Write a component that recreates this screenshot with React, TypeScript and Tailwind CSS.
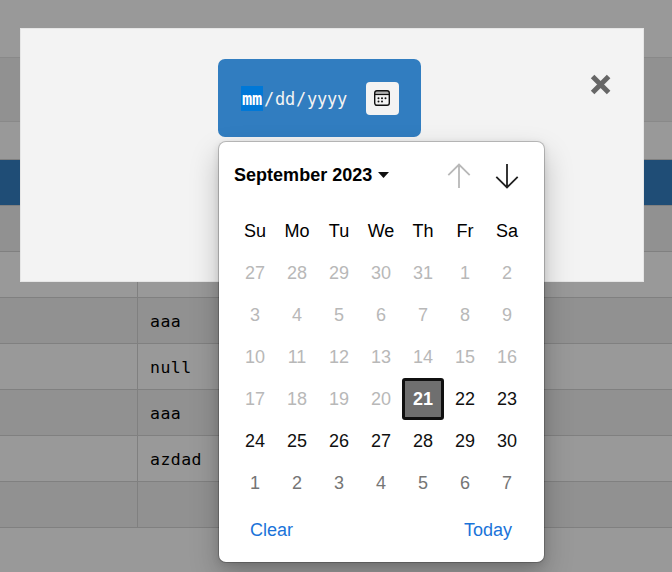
import React from "react";

type Row = { height: string; tone: string; text?: string; split?: boolean };

const rows: Row[] = [
  { height: "h-[58px]", tone: "bg-[#999999] border-[#898989]" },
  { height: "h-16", tone: "bg-[#919191] border-[#898989]" },
  { height: "h-[38px]", tone: "bg-[#999999] border-[#808080]" },
  { height: "h-[46px]", tone: "bg-[#1f4d76] border-[#808080]" },
  { height: "h-[46px]", tone: "bg-[#919191] border-[#808080]" },
  { height: "h-[46px]", tone: "bg-[#999999] border-[#808080]", split: true },
  { height: "h-[46px]", tone: "bg-[#919191] border-[#808080]", split: true, text: "aaa" },
  { height: "h-[46px]", tone: "bg-[#999999] border-[#808080]", split: true, text: "null" },
  { height: "h-[46px]", tone: "bg-[#919191] border-[#808080]", split: true, text: "aaa" },
  { height: "h-[46px]", tone: "bg-[#999999] border-[#808080]", split: true, text: "azdad" },
  { height: "h-[46px]", tone: "bg-[#919191] border-[#808080]", split: true },
];

const weekdays = ["Su", "Mo", "Tu", "We", "Th", "Fr", "Sa"];

const days = [
  27, 28, 29, 30, 31, 1, 2, 3, 4, 5, 6, 7, 8, 9, 10, 11, 12, 13, 14, 15, 16,
  17, 18, 19, 20, 21, 22, 23, 24, 25, 26, 27, 28, 29, 30, 1, 2, 3, 4, 5, 6, 7,
];

function dayClass(index: number) {
  if (index === 25)
    return "rounded-[3px] border-[3px] border-[#101010] bg-[#6f6f6f] font-bold text-white";
  if (index < 25) return "text-[#b8b8b8]";
  if (index < 35) return "text-[#101010]";
  return "text-[#757575]";
}

function Table() {
  return (
    <div className="flex flex-col font-['DejaVu_Sans_Mono',monospace] text-[16.5px] tracking-[0.45px] text-black">
      {rows.map((row, i) => (
        <div key={i} className={`flex shrink-0 border-b ${row.height} ${row.tone}`}>
          {row.split && (
            <>
              <div className="w-[138px] border-r border-[#808080]" />
              <div className="flex items-center pt-[3px] pl-3">{row.text}</div>
            </>
          )}
        </div>
      ))}
    </div>
  );
}

function CalendarIcon() {
  return (
    <svg width="16" height="16" viewBox="0 0 16 16" fill="none" stroke="#101010">
      <path d="M1 4.5V3Q1 1 3 1H13Q15 1 15 3V4.5Z" fill="#b0b0b0" stroke="none" />
      <rect x="0.7" y="0.7" width="14.6" height="14.6" rx="2.2" strokeWidth="1.4" />
      <path d="M1 4.5H15" strokeWidth="1.2" />
      <g fill="#101010" stroke="none">
        <circle cx="4.5" cy="8.3" r="1" />
        <circle cx="8" cy="8.3" r="1" />
        <circle cx="11.5" cy="8.3" r="1" />
        <circle cx="4.5" cy="11.5" r="1" />
        <circle cx="8" cy="11.5" r="1" />
      </g>
    </svg>
  );
}

function DateField() {
  return (
    <div className="ml-[197px] mt-[30px] flex h-[78px] w-[203px] items-center rounded-[7px] bg-[#317dc0] pl-[23px] font-['DejaVu_Sans_Mono',monospace] text-[17px] tracking-[-0.2px] text-[#f3f3f3]">
      <span className="flex h-[25px] w-[22px] items-center justify-center bg-[#0078d7] pt-[3px] font-bold text-white">
        mm
      </span>
      <span className="w-3 pt-[3px] text-center">/</span>
      <span className="w-5 pt-[3px]">dd</span>
      <span className="w-3 pt-[3px] text-center">/</span>
      <span className="w-[41px] pt-[3px]">yyyy</span>
      <button className="ml-[18px] flex size-[33px] items-center justify-center rounded-[4px] bg-[#f3f3f3] pr-px">
        <CalendarIcon />
      </button>
    </div>
  );
}

function Calendar() {
  return (
    <div className="absolute left-[218px] top-[141px] flex h-[422px] w-[327px] flex-col rounded-[8px] border border-black/20 bg-white bg-clip-padding font-['Liberation_Sans',Arial,sans-serif] text-[18px] shadow-[0_13px_29px_rgba(0,0,0,0.22),0_2px_7px_rgba(0,0,0,0.10)]">
      <div className="flex h-[68px] items-center pb-px pl-[15px] font-bold text-black">
        <span className="tracking-[0.02px]">September 2023</span>
        <svg className="ml-[6px] -mt-px" width="11" height="6" viewBox="0 0 11 6">
          <path d="M0 0H11L5.5 6Z" fill="#101010" />
        </svg>
        <svg className="ml-[58px]" width="24" height="26" viewBox="0 0 24 26" fill="none" stroke="#b8b8b8" strokeWidth="1.8">
          <path d="M12 25V1.5M1.3 12.2L12 1.5L22.7 12.2" />
        </svg>
        <svg className="ml-6" width="24" height="26" viewBox="0 0 24 26" fill="none" stroke="#202020" strokeWidth="1.8">
          <path d="M12 1V24.5M1.3 13.8L12 24.5L22.7 13.8" />
        </svg>
      </div>
      <div className="ml-[15px] grid w-[294px] grid-cols-7 text-center text-black">
        {weekdays.map((name) => (
          <div key={name} className="flex h-[42px] items-center justify-center">
            {name}
          </div>
        ))}
        {days.map((day, i) => (
          <div key={i} className={`flex h-[42px] items-center justify-center ${dayClass(i)}`}>
            {day}
          </div>
        ))}
      </div>
      <div className="flex h-[52px] items-center justify-between pl-[31px] pr-8 text-[#1a73d9]">
        <span>Clear</span>
        <span>Today</span>
      </div>
    </div>
  );
}

export default function App() {
  return (
    <main className="relative h-[572px] w-[672px] overflow-hidden bg-[#999999]">
      <Table />
      <section className="absolute left-5 top-7 flex h-[254px] w-[624px] items-start border border-[#e6e6e6] bg-[#f3f3f3]">
        <DateField />
        <svg className="ml-[169px] mt-[45px]" width="21" height="21" viewBox="0 0 21 21">
          <path d="M2.6 2.4L18.6 18.6M18.6 2.4L2.6 18.6" stroke="#666666" strokeWidth="5" />
        </svg>
      </section>
      <Calendar />
    </main>
  );
}
